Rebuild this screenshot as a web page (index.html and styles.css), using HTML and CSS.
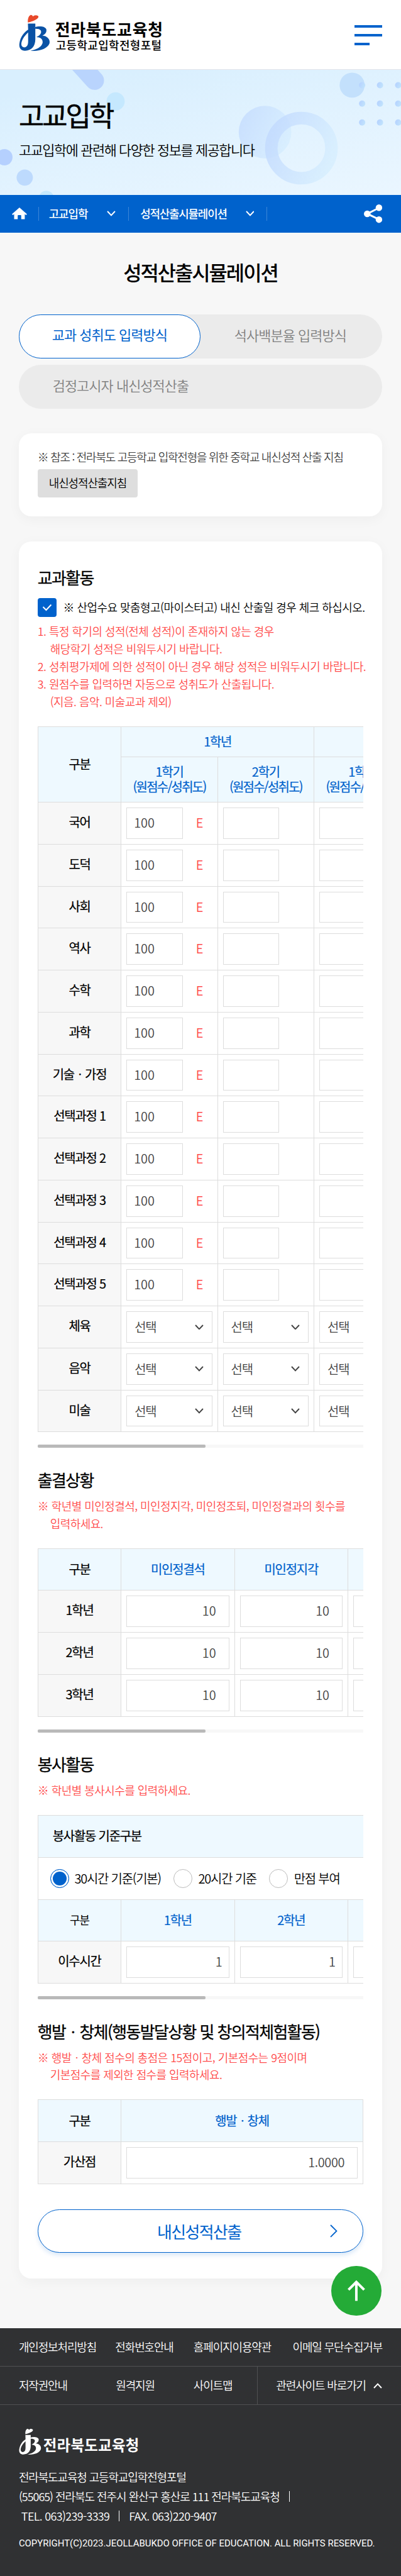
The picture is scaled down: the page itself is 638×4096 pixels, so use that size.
FILE: index.html
```html
<!DOCTYPE html>
<html lang="ko">
<head>
<meta charset="utf-8">
<title>성적산출시뮬레이션 - 고등학교입학전형포털</title>
<link rel="stylesheet" href="styles.css">
</head>
<body>
<svg class="defs" width="0" height="0" aria-hidden="true">
  <symbol id="jb" viewBox="28 22 152 177">
    <path class="jb-heart" d="M72 60C70 43 76 28 84 24C90 22 95 26 96 31C101 25 111 22 120 27C132 36 108 52 72 60Z"/>
    <path class="jb-body" fill-rule="evenodd" d="M72 65H108V82C92 90 110 80 108 96V142C107 176 90 195 58 197C37 197 27 182 31 160C36 128 54 107 73 95ZM73 108C52 128 40 148 40 166C41 178 50 182 58 180C68 177 73 168 73 152Z"/>
    <path class="jb-body" d="M78 96C104 76 152 72 161 92C165 108 154 118 142 123C168 125 182 144 176 163C166 186 132 201 84 197C112 192 138 180 143 160C146 142 134 131 113 131C132 122 140 110 134 98C126 88 102 88 78 96Z"/>
  </symbol>
  <symbol id="down" viewBox="0 0 14 9"><path d="M1 1L7 7.4L13 1" fill="none" stroke="currentColor" stroke-width="2"/></symbol>
</svg>
<div class="page">
  <header class="header">
    <a class="brand">
      <svg class="brand-mark" preserveAspectRatio="none"><use href="#jb"/></svg>
      <span class="brand-text"><strong class="brand-name">전라북도교육청</strong><span class="brand-sub">고등학교입학전형포털</span></span>
    </a>
    <button class="menu" aria-label="메뉴"><i></i><i></i><i class="short"></i></button>
  </header>

  <section class="hero">
    <svg class="hero-art" viewBox="0 0 640 200" preserveAspectRatio="none" aria-hidden="true">
      <defs>
        <linearGradient id="g1" x1="0" y1="0" x2="1" y2="0.4"><stop offset="0" stop-color="#b4d0ff"/><stop offset="1" stop-color="#c0e2fd"/></linearGradient>
        <linearGradient id="g2" x1="0" y1="0.3" x2="1" y2="0.7"><stop offset="0" stop-color="#c2dafe"/><stop offset="1" stop-color="#d6eefe"/></linearGradient>
        <linearGradient id="bg" x1="0.3" y1="0" x2="1" y2="1"><stop offset="0" stop-color="#d9effe"/><stop offset="1" stop-color="#eaf6ff"/></linearGradient>
      </defs>
      <rect width="640" height="200" fill="url(#bg)"/>
      <path d="M112 -26L151 17" stroke="#b9d4fd" stroke-width="30" stroke-linecap="round"/>
      <circle cx="184.500" cy="50.500" r="14.500" fill="#c5e8fe"/>
      <circle cx="7" cy="139.500" r="13" fill="#b5d0fe"/>
      <circle cx="39.500" cy="172" r="13" fill="#bddafd"/>
      <circle cx="74" cy="205" r="12" fill="#c5e8fd"/>
      <circle cx="423" cy="99.500" r="42" fill="url(#g2)" opacity=".75"/>
      <circle cx="481" cy="125" r="48" fill="none" stroke="url(#g2)" stroke-width="20" opacity=".8"/>
      <circle cx="562" cy="24.500" r="20" fill="#c3e0fc"/>
      <g fill="url(#g1)"><circle cx="578" cy="24.500" r="5"/><circle cx="606.500" cy="24.500" r="5"/><circle cx="635.500" cy="24.500" r="5"/><circle cx="578" cy="54" r="5"/><circle cx="606.500" cy="54" r="5"/><circle cx="635.500" cy="54" r="5"/><circle cx="578" cy="84" r="5"/><circle cx="606.500" cy="84" r="5"/><circle cx="635.500" cy="84" r="5"/></g>
    </svg>
    <div class="hero-text"><h1 class="hero-title">고교입학</h1><p class="hero-desc">고교입학에 관련해 다양한 정보를 제공합니다</p></div>
  </section>

  <nav class="crumbs">
    <a class="crumb-home" aria-label="홈"><svg width="24" height="20" viewBox="0 0 24 20"><path d="M12 0L24 10.500L22.500 12L20.500 10.500V18.500H14.800V13Q14.800 12 14 12H10Q9.200 12 9.200 13V18.500H3.500V10.500L1.500 12L0 10.500Z" fill="#fff"/></svg></a>
    <a class="crumb first">고교입학<svg class="chev"><use href="#down"/></svg></a>
    <a class="crumb second">성적산출시뮬레이션<svg class="chev"><use href="#down"/></svg></a>
    <a class="share" aria-label="공유"><svg width="29" height="30" viewBox="0 0 29 30"><path d="M24 5.500L5.500 15L24 24" fill="none" stroke="#fff" stroke-width="3"/><circle cx="24" cy="5.300" r="5.200" fill="#fff"/><circle cx="5.300" cy="15" r="5.300" fill="#fff"/><circle cx="24" cy="24.300" r="5.200" fill="#fff"/></svg></a>
  </nav>

  <main class="main">
    <h2 class="title">성적산출시뮬레이션</h2>
    <div class="tabs">
      <div class="tab-row"><a class="tab on">교과 성취도 입력방식</a><a class="tab">석사백분율 입력방식</a></div>
      <div class="tab-row"><a class="tab">검정고시자 내신성적산출</a></div>
    </div>

    <section class="card guide">
      <p class="guide-text">※ 참조 : 전라북도 고등학교 입학전형을 위한 중학교 내신성적 산출 지침</p>
      <a class="guide-btn">내신성적산출지침</a>
    </section>

    <section class="card form">
      <h3 class="head">교과활동</h3>
      <label class="check"><span class="check-box"><svg width="16" height="12" viewBox="0 0 16 12"><path d="M1.500 5L6.500 10L14.500 1.500" fill="none" stroke="#fff" stroke-width="2"/></svg></span>※ 산업수요 맞춤형고(마이스터고) 내신 산출일 경우 체크 하십시오.</label>
      <ul class="notes after-check">
        <li>1. 특정 학기의 성적(전체 성적)이 존재하지 않는 경우</li>
        <li class="in">해당학기 성적은 비워두시기 바랍니다.</li>
        <li>2. 성취평가제에 의한 성적이 아닌 경우 해당 성적은 비워두시기 바랍니다.</li>
        <li>3. 원점수를 입력하면 자동으로 성취도가 산출됩니다.</li>
        <li class="in">(지음. 음악. 미술교과 제외)</li>
      </ul>
      <div class="scroll">
        <table class="grid subjects">
          <colgroup><col class="c-name"><col class="c-term"><col class="c-term"><col class="c-term"></colgroup>
          <thead>
            <tr class="h-year"><th rowspan="2" class="dark">구분</th><th colspan="2">1학년</th><th></th></tr>
            <tr class="h-term"><th>1학기<br><span class="tight">(원점수/성취도)</span></th><th>2학기<br><span class="tight">(원점수/성취도)</span></th><th>1학기<br><span class="tight">(원점수/성취도)</span></th></tr>
          </thead>
          <tbody>
            <tr><th>국어</th><td><span class="score"><span class="box">100</span><em>E</em></span></td><td><span class="box"></span></td><td><span class="box"></span></td></tr>
            <tr><th>도덕</th><td><span class="score"><span class="box">100</span><em>E</em></span></td><td><span class="box"></span></td><td><span class="box"></span></td></tr>
            <tr><th>사회</th><td><span class="score"><span class="box">100</span><em>E</em></span></td><td><span class="box"></span></td><td><span class="box"></span></td></tr>
            <tr><th>역사</th><td><span class="score"><span class="box">100</span><em>E</em></span></td><td><span class="box"></span></td><td><span class="box"></span></td></tr>
            <tr><th>수학</th><td><span class="score"><span class="box">100</span><em>E</em></span></td><td><span class="box"></span></td><td><span class="box"></span></td></tr>
            <tr><th>과학</th><td><span class="score"><span class="box">100</span><em>E</em></span></td><td><span class="box"></span></td><td><span class="box"></span></td></tr>
            <tr><th>기술ㆍ가정</th><td><span class="score"><span class="box">100</span><em>E</em></span></td><td><span class="box"></span></td><td><span class="box"></span></td></tr>
            <tr><th>선택과정 1</th><td><span class="score"><span class="box">100</span><em>E</em></span></td><td><span class="box"></span></td><td><span class="box"></span></td></tr>
            <tr><th>선택과정 2</th><td><span class="score"><span class="box">100</span><em>E</em></span></td><td><span class="box"></span></td><td><span class="box"></span></td></tr>
            <tr><th>선택과정 3</th><td><span class="score"><span class="box">100</span><em>E</em></span></td><td><span class="box"></span></td><td><span class="box"></span></td></tr>
            <tr><th>선택과정 4</th><td><span class="score"><span class="box">100</span><em>E</em></span></td><td><span class="box"></span></td><td><span class="box"></span></td></tr>
            <tr><th>선택과정 5</th><td><span class="score"><span class="box">100</span><em>E</em></span></td><td><span class="box"></span></td><td><span class="box"></span></td></tr>
            <tr><th>체육</th><td><span class="box pick">선택<svg class="chev"><use href="#down"/></svg></span></td><td><span class="box pick">선택<svg class="chev"><use href="#down"/></svg></span></td><td><span class="box pick">선택</span></td></tr>
            <tr><th>음악</th><td><span class="box pick">선택<svg class="chev"><use href="#down"/></svg></span></td><td><span class="box pick">선택<svg class="chev"><use href="#down"/></svg></span></td><td><span class="box pick">선택</span></td></tr>
            <tr><th>미술</th><td><span class="box pick">선택<svg class="chev"><use href="#down"/></svg></span></td><td><span class="box pick">선택<svg class="chev"><use href="#down"/></svg></span></td><td><span class="box pick">선택</span></td></tr>
          </tbody>
        </table>
      </div>
      <div class="bar"><i></i></div>

      <h3 class="head next">출결상황</h3>
      <ul class="notes">
        <li>※ 학년별 미인정결석, 미인정지각, 미인정조퇴, 미인정결과의 횟수를</li>
        <li class="in">입력하세요.</li>
      </ul>
      <div class="scroll">
        <table class="grid wide">
          <colgroup><col class="c-name"><col class="c-wide"><col class="c-wide"><col class="c-wide"></colgroup>
          <thead><tr><th class="dark">구분</th><th>미인정결석</th><th>미인정지각</th><th></th></tr></thead>
          <tbody>
            <tr><th>1학년</th><td><span class="box num">10</span></td><td><span class="box num">10</span></td><td><span class="box num"></span></td></tr>
            <tr><th>2학년</th><td><span class="box num">10</span></td><td><span class="box num">10</span></td><td><span class="box num"></span></td></tr>
            <tr><th>3학년</th><td><span class="box num">10</span></td><td><span class="box num">10</span></td><td><span class="box num"></span></td></tr>
          </tbody>
        </table>
      </div>
      <div class="bar"><i></i></div>

      <h3 class="head next">봉사활동</h3>
      <ul class="notes"><li>※ 학년별 봉사시수를 입력하세요.</li></ul>
      <div class="scroll">
        <table class="grid wide">
          <colgroup><col class="c-name"><col class="c-wide"><col class="c-wide"><col class="c-wide"></colgroup>
          <thead>
            <tr><th class="dark left" colspan="4">봉사활동 기준구분</th></tr>
            <tr><td colspan="4"><div class="radios"><label><i class="radio on"></i>30시간 기준(기본)</label><label><i class="radio"></i>20시간 기준</label><label><i class="radio"></i>만점 부여</label></div></td></tr>
            <tr><th class="dark small">구분</th><th>1학년</th><th>2학년</th><th></th></tr>
          </thead>
          <tbody><tr><th>이수시간</th><td><span class="box num edge">1</span></td><td><span class="box num edge">1</span></td><td><span class="box num"></span></td></tr></tbody>
        </table>
      </div>
      <div class="bar"><i></i></div>

      <h3 class="head next">행발ㆍ창체(행동발달상황 및 창의적체험활동)</h3>
      <ul class="notes">
        <li>※ 행발ㆍ창체 점수의 총점은 15점이고, 기본점수는 9점이며</li>
        <li class="in">기본점수를 제외한 점수를 입력하세요.</li>
      </ul>
      <table class="grid bonus">
        <colgroup><col class="c-name"><col></colgroup>
        <thead><tr><th class="dark">구분</th><th>행발ㆍ창체</th></tr></thead>
        <tbody><tr><th>가산점</th><td><span class="box num point">1.0000</span></td></tr></tbody>
      </table>
      <button class="submit">내신성적산출<svg class="submit-arrow" viewBox="0 0 12 21"><path d="M1 1L10.500 10.500L1 20" fill="none" stroke="currentColor" stroke-width="1.800"/></svg></button>
    </section>
    <a class="top" aria-label="위로"><svg width="28" height="33" viewBox="0 0 28 33"><path d="M14 32.500V3M1.500 15L14 2.500L26.500 15" fill="none" stroke="#fff" stroke-width="4"/></svg></a>
  </main>

  <footer class="footer">
    <div class="links upper"><a>개인정보처리방침</a><a>전화번호안내</a><a>홈페이지이용약관</a><a class="end">이메일 무단수집거부</a></div>
    <div class="links lower"><a>저작권안내</a><a>원격지원</a><a>사이트맵</a><a class="related">관련사이트 바로가기<svg class="up"><use href="#down"/></svg></a></div>
    <div class="about">
      <div class="foot-brand"><svg class="foot-mark" preserveAspectRatio="none"><use href="#jb"/></svg><strong>전라북도교육청</strong></div>
      <p class="info">전라북도교육청 고등학교입학전형포털</p>
      <p class="info address">(55065) 전라북도 전주시 완산구 홍산로 111 전라북도교육청<i class="sep"></i></p>
      <p class="info tel"><span>TEL. 063)239-3339</span><i class="sep"></i><span>FAX. 063)220-9407</span></p>
      <p class="copy">COPYRIGHT(C)2023.JEOLLABUKDO OFFICE OF EDUCATION. ALL RIGHTS RESERVED.</p>
    </div>
  </footer>
</div>
</body>
</html>
```
FILE: styles.css
```css
* { box-sizing: border-box; margin: 0; padding: 0; }
html, body { height: 4096px; overflow: hidden; background: #303133; }
body { font: 350 18px/28px "Noto Sans CJK KR", "Noto Sans", sans-serif; color: #000; white-space: nowrap; }
.defs { position: absolute; }
.page { zoom: .99635; height: 4111px; background: #f7f7f7; }
a { color: inherit; text-decoration: none; }
i, em { font-style: normal; }
ul { list-style: none; }
.chev { width: 14px; height: 9px; }

.header { display: flex; justify-content: space-between; height: 111px; padding: 23px 30px 0; background: #fff; border-bottom: 1px solid #e3e3e8; }
.brand { display: flex; }
.brand-mark { width: 50px; height: 59px; }
.brand-text { display: flex; flex-direction: column; padding: 8px 0 0 8px; }
.brand-name { font-size: 26px; line-height: 30px; font-weight: 700; letter-spacing: .8px; }
.brand-sub { margin: 1px 0 0 1px; font-size: 18px; line-height: 20px; font-weight: 500; letter-spacing: .4px; }
.menu { display: flex; flex-direction: column; gap: 9.500px; width: 44px; margin-top: 17px; border: 0; background: none; }
.menu i { width: 44px; height: 4.500px; background: #0062cc; }
.menu .short { width: 24px; }

.hero { display: grid; height: 200px; overflow: hidden; }
.hero-art { grid-area: 1 / 1; width: 100%; height: 200px; }
.hero-text { grid-area: 1 / 1; z-index: 1; padding: 48px 30px 0; }
.hero-title { font-size: 44px; line-height: 50px; font-weight: 400; -webkit-text-stroke: .5px; letter-spacing: -.068em; }
.hero-desc { margin-top: 14px; font-size: 22px; line-height: 32px; letter-spacing: -.065em; }

.crumbs { display: flex; align-items: center; height: 60px; padding: 0 30px 0 19px; background: #0062cc; color: #fff; font-weight: 500; letter-spacing: -.06em; }
.crumb-home { display: flex; width: 43px; height: 22px; align-items: center; border-right: 2px solid #3c86d8; }
.crumb { display: flex; align-items: center; justify-content: space-between; height: 22px; border-right: 2px solid #3c86d8; }
.crumb.first { width: 144px; padding: 0 20px 0 16px; }
.crumb.second { width: 221px; padding: 0 20px 0 18px; letter-spacing: -.067em; }
.share { display: flex; margin-left: auto; }

.main { position: relative; height: 3345px; padding: 0 30px; }
.title { padding-top: 40px; font-size: 32px; line-height: 48px; font-weight: 500; letter-spacing: -.065em; text-align: center; }
.tabs { display: flex; flex-direction: column; gap: 10px; margin-top: 43px; }
.tab-row { display: flex; height: 70px; border-radius: 35px; background: #ebebeb; }
.tab { flex: 1; padding-left: 54px; font-size: 22px; line-height: 66px; letter-spacing: -.043em; color: #808080; border-radius: 35px; }
.tab.on { padding-left: 52px; line-height: 62px; color: #0062cc; font-weight: 400; background: #fff; border: 2px solid #0062cc; }

.card { padding: 0 30px; background: #fff; border-radius: 20px; box-shadow: 0 5px 20px rgba(0, 0, 0, .04); }
.guide { height: 132px; margin-top: 40px; padding-top: 24px; }
.guide-text { color: #444; letter-spacing: -.065em; word-spacing: -.2px; }
.guide-btn { display: block; width: 160px; height: 45px; margin-top: 5px; line-height: 44px; text-align: center; letter-spacing: -.06em; background: #dedede; border-radius: 4px; }
.form { height: 2772px; margin-top: 40px; padding-top: 43px; }
.head { height: 30px; font-size: 26px; line-height: 28px; font-weight: 400; -webkit-text-stroke: .3px; letter-spacing: -.06em; }
.head.next { margin-top: 37px; }
.check { display: flex; align-items: center; gap: 11px; height: 30px; margin-top: 18px; line-height: 28px; letter-spacing: -.5px; }
.check-box { display: flex; align-items: center; justify-content: center; width: 30px; height: 30px; flex: none; border-radius: 4px; background: #0062cc; }
.notes { margin-top: 12px; color: #ff4b4b; letter-spacing: -.5px; }
.notes li { height: 28px; line-height: 27px; }
.notes .in { padding-left: 20px; }
.after-check { margin-top: 9px; }

.scroll { overflow: hidden; }
.grid { width: 520px; margin-top: 25px; table-layout: fixed; border-collapse: separate; border-spacing: 0; border: solid #ddd; border-width: 1px 0 0 1px; }
.subjects { width: 596px; }
.wide { width: 677px; }
.c-name { width: 133px; }
.c-term { width: 154px; }
.c-wide { width: 181px; }
.grid tr { height: 67px; }
.grid .h-year { height: 49px; }
.grid .h-term { height: 72px; }
.grid th, .grid td { border: solid #ddd; border-width: 0 1px 1px 0; vertical-align: middle; }
.grid th { padding-bottom: 4px; font-size: 20px; line-height: 24px; font-weight: 400; -webkit-text-stroke: .25px; letter-spacing: -.06em; background: #f7f7f7; }
.grid thead th { padding-bottom: 1px; color: #0062cc; background: #eef9ff; }
.grid thead .dark { color: #000; }
.grid thead .left { padding-left: 23px; text-align: left; }
.grid thead .small { font-size: 18px; -webkit-text-stroke: 0; }
.tight { letter-spacing: -.085em; }
.grid td { padding: 0 8px; background: #fff; }
.box { display: block; flex: none; width: 90px; height: 50px; padding-left: 11px; border: 1px solid #ddd; font-size: 20px; line-height: 46px; color: #444; }
.score { display: flex; }
.score em { padding-left: 21px; font-size: 20px; line-height: 49px; color: #ff4b4b; }
.pick { display: flex; align-items: center; justify-content: space-between; width: 100%; padding: 0 13px 0 12px; letter-spacing: -.06em; line-height: 46px; }
.num { width: 100%; padding: 0 20px 0 0; text-align: right; }
.num.edge { padding-right: 10px; }
.num.point { letter-spacing: -.02em; }
.bar { height: 5px; margin-top: 20px; background: #f7f7f7; }
.bar i { display: block; width: 268px; height: 5px; border-radius: 2px; background: #b9b9b9; }
.radios { display: flex; padding-left: 11px; gap: 20px; font-size: 20px; line-height: 28px; letter-spacing: -.06em; }
.radios label { display: flex; align-items: center; gap: 9px; }
.radios label + label { gap: 10px; }
.radio { width: 30px; height: 30px; border: 1px solid #bbb; border-radius: 50%; }
.radio.on { border-color: #0062cc; background: #0062cc; box-shadow: inset 0 0 0 3px #fff; }
.submit { display: flex; align-items: center; width: 520px; height: 70px; margin-top: 40px; padding: 0 40px 0 190px; font: 400 26px/66px "Noto Sans CJK KR", sans-serif; letter-spacing: -.06em; color: #0062cc; background: #fff; border: 1px solid #0062cc; border-radius: 35px; box-shadow: 0 4px 8px rgba(0, 98, 204, .15); }
.submit-arrow { width: 12px; height: 21px; margin-left: auto; }
.top { position: absolute; right: 31px; bottom: 20px; display: flex; align-items: center; justify-content: center; width: 80px; height: 80px; border-radius: 50%; background: #24ab37; }

.footer { height: 395px; background: #303133; color: #fff; letter-spacing: -.06em; }
.links { display: grid; padding: 0 30px; line-height: 60px; border-bottom: 1px solid #505153; }
.upper { grid-template-columns: 154px 125px 1fr auto; height: 61px; }
.lower { grid-template-columns: 155px 124px 102px 1fr; height: 61px; }
.related { display: flex; align-items: center; justify-content: space-between; padding-left: 29px; border-left: 1px solid #505153; }
.up { width: 14px; height: 9px; transform: rotate(180deg); }
.about { padding: 37px 30px 0; }
.foot-brand { display: flex; height: 43px; color: #fff; }
.foot-brand strong { padding: 12px 0 0 3px; font-size: 23.500px; line-height: 30px; font-weight: 700; letter-spacing: .3px; }
.foot-mark { --mark: #fff; width: 36px; height: 43px; }
.info { display: flex; align-items: center; height: 31px; }
.foot-brand + .info { margin-top: 20px; }
.address { letter-spacing: -.055em; }
.tel { padding-left: 4px; letter-spacing: -.035em; }
.sep { width: 1px; height: 17px; margin: 0 15px; background: #fff; }
.jb-heart { fill: var(--mark, #e8492a); }
.jb-body { fill: var(--mark, #0a52a5); }
.copy { margin-top: 15px; font: 400 15px/28px Roboto, sans-serif; letter-spacing: 0; }
```
